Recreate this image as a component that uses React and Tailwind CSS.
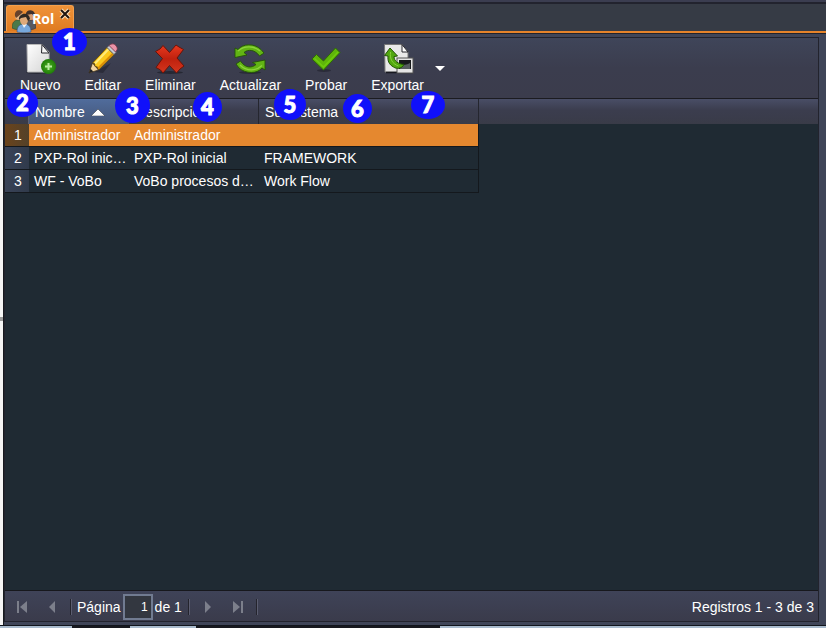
import React from "react";

const NewIcon = () => (
  <svg width="32" height="32" viewBox="0 0 32 32" aria-hidden="true">
    <defs>
      <linearGradient id="paper" x1="0" y1="0" x2="1" y2="1">
        <stop offset="0" stopColor="#ffffff" />
        <stop offset="1" stopColor="#d4d4d4" />
      </linearGradient>
      <radialGradient id="plus">
        <stop offset="0" stopColor="#4caf22" />
        <stop offset="1" stopColor="#1f7d08" />
      </radialGradient>
    </defs>
    <ellipse cx="13" cy="29.5" rx="11" ry="1.5" fill="#1b1c25" opacity=".6" />
    <path d="M3 1.500H18L25 9V29H3.500Z" fill="url(#paper)" stroke="#b9b9b9" />
    <path d="M18 1.500 17.500 10H25Z" fill="#f6f6f6" stroke="#26262c" />
    <circle cx="24.500" cy="23.500" r="7.500" fill="url(#plus)" />
    <path d="M24.500 20v7M21 23.500h7" stroke="#b9eda0" strokeWidth="2" />
  </svg>
);

const EditIcon = () => (
  <svg width="32" height="32" viewBox="0 0 32 32" aria-hidden="true">
    <path d="M8 29 24 20 16 30Z" fill="#1b1c25" opacity=".5" />
    <path d="M2 30 5.500 20 11.500 27Z" fill="#f2d5a2" stroke="#3a2a10" strokeWidth=".7" />
    <path d="M2 30 3.600 25.700 6.300 28.600Z" fill="#202020" />
    <path d="M5.500 20 20 4.500 27 11.500 11.500 27 10.500 24 8 23.500 7.500 20.500Z" fill="#fcc91c" stroke="#5a4108" strokeWidth=".8" />
    <path d="M8 20.500 21.500 6.200" stroke="#ffec78" strokeWidth="2" />
    <path d="M11 25.500 26 10.500" stroke="#dc8d08" strokeWidth="1.800" />
    <path d="m20 4.500 2.500-2.300 6.800 6.800-2.300 2.500Z" fill="#c8cbd0" stroke="#5b5e67" strokeWidth=".7" />
    <path d="m22 2.500 1.500-1c2-1.300 4-.5 5.500 1.200s1.800 3.500.3 5.300l-.8 1Z" fill="#ec93a8" stroke="#743545" strokeWidth=".8" />
  </svg>
);

const DeleteIcon = () => (
  <svg width="32" height="32" viewBox="0 0 32 32" aria-hidden="true">
    <defs>
      <linearGradient id="red" x1="0" y1="0" x2="0" y2="1">
        <stop offset="0" stopColor="#e8391f" />
        <stop offset=".5" stopColor="#bf210e" />
        <stop offset="1" stopColor="#d5371e" />
      </linearGradient>
    </defs>
    <ellipse cx="16" cy="29.500" rx="13" ry="1.500" fill="#191a23" opacity=".6" />
    <path d="M9 2.500 15.500 9.500 22 2 25 4 29.500 6.500 23 15 30 23 26 26 22.500 30 15.500 22.500 9 30 6.500 27 2 24.500 8.500 15.500 1.500 8.500 6 6Z" fill="url(#red)" stroke="#6b1308" strokeWidth="1" strokeLinejoin="round" />
  </svg>
);

const RefreshIcon = () => (
  <svg width="32" height="32" viewBox="0 0 32 32" aria-hidden="true">
    <ellipse cx="16" cy="29.500" rx="11" ry="1.500" fill="#191a23" opacity=".5" />
    <g fill="#62b414" stroke="#235407" strokeWidth=".9" strokeLinejoin="round">
      <path d="M1 5 4 6.500C9 .5 20 0 27 6.500L30 10 25.500 13C21 6.500 14 6 10 9.500L13 12 1 14.500Z" />
      <path d="M31 27 28 25C23 31 12 31 5 25L2 21 6.500 18C11 25 17.500 25.500 22 21.500L18.500 19.500 31 17Z" />
    </g>
    <path d="M4 8C10 2.500 20 2.500 26 8M6 22C13 29 22 28 28 22.500" fill="none" stroke="#8dd43c" strokeWidth="1.300" />
  </svg>
);

const CheckIcon = () => (
  <svg width="32" height="32" viewBox="0 0 32 32" aria-hidden="true">
    <ellipse cx="14" cy="27.500" rx="7" ry="1.500" fill="#191a23" opacity=".5" />
    <path d="m2 16 4.500-4.500 7 6.500L25.500 5 30 9.500 13.500 27Z" fill="#5fb60a" stroke="#2e6b05" strokeWidth="1" strokeLinejoin="round" />
    <path d="m4.500 15.500 9 8.500L28 9" fill="none" stroke="#6fcb0d" strokeWidth="1.500" />
  </svg>
);

const ExportIcon = () => (
  <svg width="32" height="32" viewBox="0 0 32 32" aria-hidden="true">
    <path d="M2.500 1.500H20L26 9V29H3Z" fill="#e9e9e9" stroke="#777" />
    <path d="M20 1.500V9h6Z" fill="#fff" stroke="#27272c" />
    <path d="M4 29.500h27" stroke="#17181f" strokeWidth="1.500" />
    <rect x="15" y="15" width="16" height="15" fill="#e5e5e5" stroke="#555" />
    <rect x="17" y="17" width="12" height="9" fill="#17191b" />
    <path d="M18 25c4-5 6-2 10-5v6H18Z" fill="#555b5d" />
    <path d="M8 5 15.500 13 12 13.500C12 18 16 21 22 21.500c-2 4-7 5-10.500 2.500C7 21.500 5.500 18 6 13L2.500 12.500Z" fill="#51a70f" stroke="#225307" strokeLinejoin="round" />
    <path d="M8.500 9c-1 7 2 12 8 14" fill="none" stroke="#88cf3d" />
  </svg>
);

const PeopleIcon = () => (
  <svg width="24" height="24" viewBox="0 0 24 24" className="mt-1 shrink-0" aria-hidden="true">
    <path d="M0 19c0-6 3-8 6-8s5 3 5 9c-3 1-8 1-11-1Z" fill="#4b7948" stroke="#2d472d" strokeWidth=".6" />
    <circle cx="7" cy="7" r="4" fill="#dfb286" />
    <path d="M3 7C2 1 8 0 11 3L9 5 4 9Z" fill="#67412b" />
    <path d="M14 20c-1-7 2-9 5-9s5 3 5 8c-3 2-7 2-10 1Z" fill="#56585e" stroke="#303138" strokeWidth=".6" />
    <circle cx="18" cy="7" r="4" fill="#d79c70" />
    <path d="M14 6c-1-5 7-7 9-1v4l-3-4Z" fill="#40302a" />
    <path d="M5 23c0-6 3-8 7-8s7 2 7 8c-4 1-10 1-14 0Z" fill="#77a8dc" stroke="#35547f" strokeWidth=".6" />
    <path d="m10 15 2 4 3-4Z" fill="#f0f4fa" />
    <ellipse cx="12" cy="11" rx="4" ry="5" fill="#dfaa7a" />
    <path d="M7 11c-1-7 10-9 11-1l-2 2-2-4-5 1Z" fill="#302923" />
  </svg>
);

const tools = [
  ["Nuevo", NewIcon],
  ["Editar", EditIcon],
  ["Eliminar", DeleteIcon],
  ["Actualizar", RefreshIcon],
  ["Probar", CheckIcon],
  ["Exportar", ExportIcon],
];

const rows = [
  ["Administrador", "Administrador", ""],
  ["PXP-Rol inic…", "PXP-Rol inicial", "FRAMEWORK"],
  ["WF - VoBo", "VoBo procesos d…", "Work Flow"],
];

const badges = [
  [1, "left-[52px] top-[28px] h-[28px] w-[35px]"],
  [2, "left-[7px] top-[89px] h-[28px] w-[31px]"],
  [3, "left-[115px] top-[88px] h-[35px] w-[35px]"],
  [4, "left-[193px] top-[92px] h-[30px] w-[29px]"],
  [5, "left-[274px] top-[89px] h-[31px] w-[32px]"],
  [6, "left-[343px] top-[94px] h-[29px] w-[29px]"],
  [7, "left-[411px] top-[91px] h-[28px] w-[34px]"],
];

function PageButton({ label, last, back }) {
  return (
    <button type="button" aria-label={label} className="flex h-6 w-6 items-center justify-center text-[#7c7f8b]">
      <svg width="12" height="12" viewBox="0 0 12 12" className={back ? "rotate-180" : ""} aria-hidden="true">
        <path d={last ? "M1 0 8 6 1 12Z" : "M3 0 9 6 3 12Z"} fill="currentColor" />
        {last && <path d="M9 0h2v12H9Z" fill="currentColor" />}
      </svg>
    </button>
  );
}

const Divider = () => (
  <span className="h-4 w-0.5 border-l border-r border-l-[#24242d] border-r-[#5b5d70]" />
);

function Toolbar() {
  return (
    <div role="toolbar" className="flex h-[61px] items-start border-b border-[#1b1b20] bg-linear-to-b from-[#3f4559] via-[#3b3d4e] to-[#3b3c4c] px-[3px] pt-[5px]">
      {tools.map(([label, Icon]) => (
        <button key={label} type="button" className="flex flex-col items-center px-3 leading-5">
          <Icon />
          <span>{label}</span>
        </button>
      ))}
      <button type="button" aria-label="Opciones de exportación" className="-ml-0.5 flex h-[50px] w-3 items-center justify-center">
        <svg width="10" height="5" viewBox="0 0 10 5" aria-hidden="true"><path d="M0 0h10L5 5Z" fill="white" /></svg>
      </button>
    </div>
  );
}

function RoleTable() {
  return (
    <div className="flex-1 bg-[#1f2a33] bg-[linear-gradient(#494e66,#3b3d4e_45%,#393b48)] bg-[length:100%_25px] bg-no-repeat">
      <table className="w-[474px] table-fixed border-separate border-spacing-0 text-left">
        <colgroup>
          <col className="w-6" />
          <col className="w-[100px]" />
          <col className="w-[130px]" />
          <col className="w-[220px]" />
        </colgroup>
        <thead>
          <tr className="h-[25px]">
            <th aria-label="Número" className="border-r border-[#5d6277] p-0" />
            <th aria-sort="ascending" className="bg-linear-to-b from-[#506c9c] to-[#455678] p-0 pl-1.5 font-normal">
              <span className="flex items-center gap-1.5">
                Nombre
                <svg width="14" height="8" viewBox="0 0 14 8" aria-hidden="true"><path d="m0 8 7-7 7 7Z" fill="white" stroke="#202633" strokeWidth=".5" /></svg>
              </span>
            </th>
            <th className="border-r border-[#25262f] p-0 pl-1.5 font-normal">Descripción</th>
            <th className="border-r border-[#25262f] p-0 pl-1.5 font-normal">Subsistema</th>
          </tr>
        </thead>
        <tbody>
          {rows.map((row, i) => (
            <tr key={row[0]} className={i === 0 ? "h-[23px] bg-[#e5882f]" : "h-[23px]"}>
              <th scope="row" className={"border-b border-[#14181d] p-0 pl-0.5 text-center font-normal " + (i === 0 ? "bg-linear-to-r from-[#6b431a] to-[#534129]" : "bg-linear-to-r from-[#394358] to-[#303a4b]")}>{i + 1}</th>
              {row.map((value, j) => (
                <td key={j} className={"border-b border-[#14181d] py-0 pr-0 pl-[5px] whitespace-nowrap " + (j === 2 ? "border-r" : "")}>{value}</td>
              ))}
            </tr>
          ))}
        </tbody>
      </table>
    </div>
  );
}

export default function App() {
  return (
    <div className="relative flex min-h-screen flex-col overflow-hidden bg-[#3f4558] font-['Liberation_Sans',Arial,sans-serif] text-[14px] leading-[22px] text-white">
      <div className="flex flex-1">
        <div className="flex w-[3px] flex-col justify-center bg-[#f5f5f5] pt-3">
          <span className="h-1 bg-[#9b9b9b]" />
        </div>
        <div className="flex min-w-0 flex-1 flex-col border-l border-[#171a20]">
          <header className="flex h-[34px] items-end border-t-2 border-b border-t-[#3b3d50] border-b-[#20232d] bg-[#363b45]">
            <div className="flex h-full w-full items-end border-t-2 border-b-2 border-t-[#22232e] border-b-[#e5832a] pl-[2px]">
              <div className="flex h-[26px] w-[68px] items-center rounded-t-[3px] border border-b-0 border-[#f5a04d] bg-linear-to-b from-[#ef9238] to-[#df7b20]">
                <a href="#rol" className="flex min-w-0 flex-1 items-center pl-[5px] font-['Open_Sans',sans-serif] text-[14px] font-bold">
                  <PeopleIcon />
                  <span className="-ml-1">Rol</span>
                </a>
                <button type="button" aria-label="Cerrar Rol" className="mb-2.5 h-3 w-[14px]">
                  <svg width="12" height="12" viewBox="0 0 12 12" aria-hidden="true">
                    <path d="m2 2 8 8M10 2l-8 8" stroke="#ffe4bd" strokeWidth="4" />
                    <path d="m2 2 8 8M10 2l-8 8" stroke="#201610" strokeWidth="2" />
                  </svg>
                </button>
              </div>
            </div>
          </header>
          <main className="mt-[3px] mr-[7px] mb-[3px] flex flex-1 flex-col border border-[#22232d]">
            <Toolbar />
            <RoleTable />
            <footer className="flex h-[31px] items-center border-t border-[#17181d] bg-linear-to-b from-[#3f4358] to-[#3a3b4b] pt-px pr-1 pl-[5px]">
              <PageButton label="Primera página" last back />
              <span className="ml-1.5 flex"><PageButton label="Página anterior" back /></span>
              <span className="ml-1.5 flex"><Divider /></span>
              <label htmlFor="pagina" className="ml-[5px]">Página</label>
              <input id="pagina" defaultValue="1" className="mx-0.5 h-[26px] w-[30px] border-2 border-[#717b91] bg-[#333740] pr-[3px] text-right text-[12px] outline-none" />
              <span>de 1</span>
              <span className="ml-1.5 flex"><Divider /></span>
              <span className="ml-1.5 flex"><PageButton label="Página siguiente" /></span>
              <span className="ml-1.5 flex"><PageButton label="Última página" last /></span>
              <span className="ml-1.5 flex"><Divider /></span>
              <span className="ml-auto">Registros 1 - 3 de 3</span>
            </footer>
          </main>
        </div>
      </div>
      <div className="flex h-[3px] border-t border-[#11151c] bg-[#a9bbcd]">
        <span className="w-[72px]" />
        <span className="w-[58px] bg-[#17191f]" />
        <span className="w-[66px]" />
        <span className="w-[244px] bg-[#17191f]" />
      </div>
      {badges.map(([number, place]) => (
        <span key={number} className={"pointer-events-none absolute flex items-center justify-center rounded-[50%] bg-[#1010fa] font-['Lato',sans-serif] text-[22px] leading-none font-black [-webkit-text-stroke:1px_white] " + place}>
          {number}
        </span>
      ))}
    </div>
  );
}
